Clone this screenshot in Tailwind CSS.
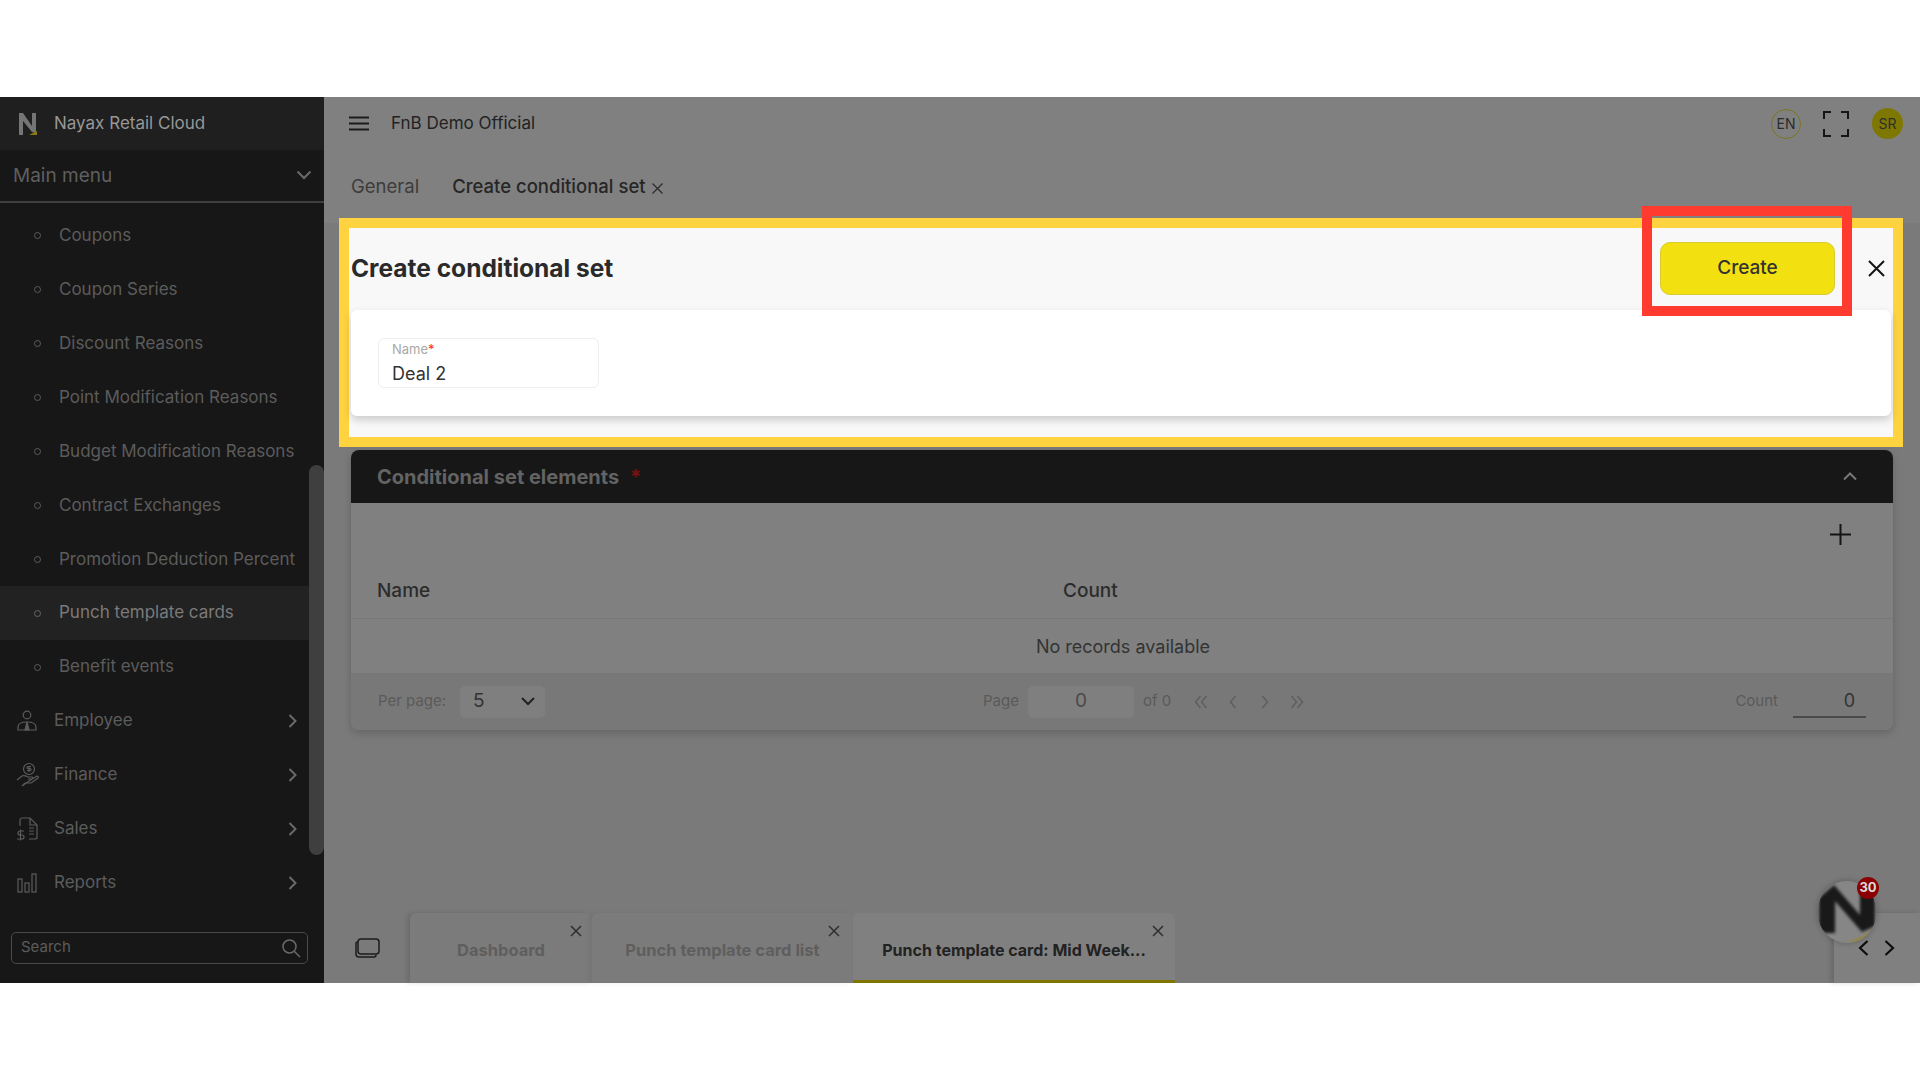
<!DOCTYPE html>
<html lang="en">
<head>
    <meta charset="UTF-8" />
    <title>Nayax Retail Cloud</title>
    <script src="https://cdn.jsdelivr.net/npm/@tailwindcss/browser@4"></script>
</head>
<body class="bg-white font-['Inter',sans-serif] h-[1080px] w-[1920px] overflow-hidden">
    <div class="h-[97px]"></div>

    <div class="h-[886px] flex bg-[#808080]">
        <!-- sidebar -->
        <aside class="relative w-[324px] shrink-0 flex flex-col bg-[#171717] text-[#5c5c5c]">
            <div class="h-[53px] flex items-center bg-[#1f1f1f] pl-[18px]">
                <svg class="w-[20px] h-[24px]" viewBox="0 0 20 24">
                    <path d="M1 23V1h4l9 13V1h4v20l-4-1L5 9v14z" fill="#757575"/>
                    <path d="M11 23l8-4v4z" fill="#8a7a10"/>
                </svg>
                <span class="ml-[16px] pt-[1px] text-[17px] text-[#979797]">Nayax Retail Cloud</span>
            </div>
            <div class="h-[53px] flex items-center justify-between pl-[13px] pr-[12px] border-b-2 border-[#3f3f3f]">
                <span class="pt-[2px] text-[19px] text-[#5f5f5f]">Main menu</span>
                <svg class="w-[16px] h-[10px] mb-[2px]" viewBox="0 0 16 10" fill="none" stroke="#6a6a6a" stroke-width="2"><path d="M1.500 1.500L8 8l6.500-6.500"/></svg>
            </div>
            <ul class="pt-[6px] pr-[15px] text-[17px]">
                <li class="h-[53.9px] flex items-center pl-[34px]"><span class="w-[7px] h-[7px] rounded-full border border-[#5c5c5c] mr-[18px]"></span>Coupons</li>
                <li class="h-[53.9px] flex items-center pl-[34px]"><span class="w-[7px] h-[7px] rounded-full border border-[#5c5c5c] mr-[18px]"></span>Coupon Series</li>
                <li class="h-[53.9px] flex items-center pl-[34px]"><span class="w-[7px] h-[7px] rounded-full border border-[#5c5c5c] mr-[18px]"></span>Discount Reasons</li>
                <li class="h-[53.9px] flex items-center pl-[34px]"><span class="w-[7px] h-[7px] rounded-full border border-[#5c5c5c] mr-[18px]"></span>Point Modification Reasons</li>
                <li class="h-[53.9px] flex items-center pl-[34px]"><span class="w-[7px] h-[7px] rounded-full border border-[#5c5c5c] mr-[18px]"></span>Budget Modification Reasons</li>
                <li class="h-[53.9px] flex items-center pl-[34px]"><span class="w-[7px] h-[7px] rounded-full border border-[#5c5c5c] mr-[18px]"></span>Contract Exchanges</li>
                <li class="h-[53.9px] flex items-center pl-[34px]"><span class="w-[7px] h-[7px] rounded-full border border-[#5c5c5c] mr-[18px]"></span>Promotion Deduction Percent</li>
                <li class="h-[53.9px] flex items-center pl-[34px] bg-[#222222] text-[#7a7a7a]"><span class="w-[7px] h-[7px] rounded-full border border-[#666666] mr-[18px]"></span>Punch template cards</li>
                <li class="h-[53.9px] flex items-center pl-[34px]"><span class="w-[7px] h-[7px] rounded-full border border-[#5c5c5c] mr-[18px]"></span>Benefit events</li>
                <li class="h-[53.9px] flex items-center pl-[17px] pr-[12px]">
                    <svg class="w-[20px] h-[22px] mr-[17px]" viewBox="0 0 20 22" fill="none" stroke="#5c5c5c" stroke-width="1.200"><circle cx="10" cy="5" r="3.800"/><path d="M1 20v-3c0-3 3-5 9-5s9 2 9 5v3z"/><path d="M10 12l-2 8h4z" fill="#5c5c5c"/></svg>
                    <span class="flex-1">Employee</span>
                    <svg class="w-[9px] h-[14px]" viewBox="0 0 9 14" fill="none" stroke="#6a6a6a" stroke-width="2"><path d="M1.500 1l6 6-6 6"/></svg>
                </li>
                <li class="h-[53.9px] flex items-center pl-[16px] pr-[12px]">
                    <svg class="w-[23px] h-[25px] mr-[15px]" viewBox="0 0 23 25" fill="none" stroke="#5c5c5c" stroke-width="1.200"><circle cx="13" cy="7" r="5.500"/><path d="M13 4v6M11 8.500h3a1 1 0 000-2h-2a1 1 0 010-2h3"/><path d="M1 18l5-4c2-1 4 0 6 1h4c1 0 1 2 0 2h-4m4 0l5-3c1 0 1.500 1 1 2l-7 5H9l-3 3z"/></svg>
                    <span class="flex-1">Finance</span>
                    <svg class="w-[9px] h-[14px]" viewBox="0 0 9 14" fill="none" stroke="#6a6a6a" stroke-width="2"><path d="M1.500 1l6 6-6 6"/></svg>
                </li>
                <li class="h-[53.9px] flex items-center pl-[16px] pr-[12px]">
                    <svg class="w-[22px] h-[25px] mr-[16px]" viewBox="0 0 22 25" fill="none" stroke="#5c5c5c" stroke-width="1.200"><path d="M4 10V4c0-1 1-2 2-2h8l7 7v12c0 1-1 2-2 2h-6"/><path d="M14 2v7h7M13 12h5M13 15h5M13 18h5"/><path d="M8 15H4a1.800 1.800 0 000 4h2a1.800 1.800 0 010 4H1M4.500 13.500v11"/></svg>
                    <span class="flex-1">Sales</span>
                    <svg class="w-[9px] h-[14px]" viewBox="0 0 9 14" fill="none" stroke="#6a6a6a" stroke-width="2"><path d="M1.500 1l6 6-6 6"/></svg>
                </li>
                <li class="h-[53.9px] flex items-center pl-[17px] pr-[12px]">
                    <svg class="w-[20px] h-[20px] mr-[17px]" viewBox="0 0 20 20" fill="none" stroke="#5c5c5c" stroke-width="1.200"><rect x="1" y="6" width="4" height="13"/><rect x="8" y="10" width="4" height="9"/><rect x="15" y="1" width="4" height="18"/></svg>
                    <span class="flex-1">Reports</span>
                    <svg class="w-[9px] h-[14px]" viewBox="0 0 9 14" fill="none" stroke="#6a6a6a" stroke-width="2"><path d="M1.500 1l6 6-6 6"/></svg>
                </li>
            </ul>
            <div class="mt-[22px] ml-[11px] w-[297px] h-[32px] flex items-center justify-between pl-[9px] pr-[6px] border border-[#4a4a4a] rounded-[5px] text-[15px]">
                <span>Search</span>
                <svg class="w-[20px] h-[20px]" viewBox="0 0 20 20" fill="none" stroke="#6a6a6a" stroke-width="1.500"><circle cx="8.500" cy="8.500" r="6.500"/><path d="M13.500 13.500L19 19"/></svg>
            </div>
            <!-- scrollbar floats over the list -->
            <div class="absolute right-0 top-[368px] w-[15px] h-[390px] rounded-[8px] bg-[#3f3f3f]"></div>
        </aside>

        <main class="flex-1 min-w-0 flex flex-col">
            <header class="h-[53px] shrink-0 flex items-center pl-[25px] pr-[17px]">
                <svg class="w-[20px] h-[15px]" viewBox="0 0 20 15" fill="none" stroke="#1c1c1c" stroke-width="2"><path d="M0 1.500h20M0 7.500h20M0 13.500h20"/></svg>
                <span class="ml-[22px] pt-[1px] text-[17px] text-[#222222] flex-1">FnB Demo Official</span>
                <span class="w-[30px] h-[30px] rounded-full border border-[#7c7420] flex items-center justify-center text-[14px] text-[#2b2b2b]">EN</span>
                <svg class="ml-[22px] w-[26px] h-[26px]" viewBox="0 0 26 26" fill="none" stroke="#151515" stroke-width="2"><path d="M1 8V1h7M18 1h7v7M25 18v7h-7M8 25H1v-7"/></svg>
                <span class="ml-[23px] w-[31px] h-[31px] rounded-full bg-[#7f7800] flex items-center justify-center text-[14px] text-[#2f2f2f]">SR</span>
            </header>
            <nav class="h-[73px] shrink-0 flex items-start pl-[27px] pt-[23px] text-[18.5px] bg-[#808080]">
                <span class="text-[#3c3c3c]">General</span>
                <span class="ml-[33px] text-[#262626] font-medium">Create conditional set</span>
                <svg class="ml-[6px] mt-[10px] w-[11px] h-[11px]" viewBox="0 0 11 11" fill="none" stroke="#2a2a2a" stroke-width="1.200"><path d="M.5.5l10 10M10.500.5l-10 10"/></svg>
            </nav>

            <div class="relative flex-1 min-h-0 flex flex-col bg-[#7a7a7a]">
                <!-- highlighted panel -->
                <section class="relative z-10 mt-[-5px] ml-[15px] mr-[17px] h-[229px] border-[10px] border-[#ffd23f] bg-[#f8f8f8] px-[2px]">
                    <div class="h-[82px] flex items-center justify-between pr-[6px] pb-[2px]">
                        <h1 class="text-[24.5px] font-bold text-[#2a2a2a]">Create conditional set</h1>
                        <div class="flex items-center">
                            <button class="w-[175px] h-[53px] rounded-[10px] bg-[#f2e011] border border-[#d8ca30] text-[19px] font-medium text-[#333333]">Create</button>
                            <svg class="ml-[33px] w-[17px] h-[17px]" viewBox="0 0 17 17" fill="none" stroke="#151515" stroke-width="2"><path d="M1 1l15 15M16 1L1 16"/></svg>
                        </div>
                    </div>
                    <div class="h-[106px] bg-white rounded-[6px] shadow-[0_4px_8px_rgba(0,0,0,0.18)] pl-[27px] pt-[28px]">
                        <div class="w-[221px] h-[50px] border border-[#eeeeee] rounded-[6px] pl-[13px] pt-[3px]">
                            <div class="text-[13px] leading-[15px] text-[#a8a8a8]">Name<span class="text-[#ff2a2a]">*</span></div>
                            <div class="text-[18px] leading-[24px] mt-[5px] text-[#333333]">Deal 2</div>
                        </div>
                    </div>
                    <!-- red annotation round the button -->
                    <div class="absolute right-[41px] top-[-22px] w-[210px] h-[110px] border-[10px] border-[#ff3b30]"></div>
                </section>

                <section class="mt-[3px] mx-[27px] h-[280px] shrink-0 flex flex-col rounded-[8px] bg-[#808080] shadow-[0_3px_8px_rgba(0,0,0,0.18)]">
                    <div class="h-[53px] shrink-0 flex items-center justify-between bg-[#171717] rounded-t-[8px] pl-[26px] pr-[36px]">
                        <span class="text-[20px] font-bold text-[#636363]">Conditional set elements <span class="ml-[6px] text-[#7a1010]">*</span></span>
                        <svg class="w-[14px] h-[9px]" viewBox="0 0 14 9" fill="none" stroke="#777777" stroke-width="2"><path d="M1 7.500l6-6 6 6"/></svg>
                    </div>
                    <div class="h-[62px] shrink-0 flex justify-end pt-[21px] pr-[42px]">
                        <svg class="w-[21px] h-[21px]" viewBox="0 0 21 21" fill="none" stroke="#151515" stroke-width="2"><path d="M10.500 0v21M0 10.500h21"/></svg>
                    </div>
                    <div class="h-[54px] shrink-0 flex items-center pl-[26px] border-b border-[#777777] text-[19px] font-medium text-[#2c2c2c]">
                        <span class="w-[686px]">Name</span>
                        <span>Count</span>
                    </div>
                    <div class="h-[54px] shrink-0 flex items-center justify-center pl-[2px] text-[18px] text-[#333333]">No records available</div>
                    <div class="flex-1 flex items-center bg-[#787878] rounded-b-[8px] pl-[27px] pr-[27px] text-[15px] text-[#5a5a5a]">
                        <span class="w-[82px]">Per page:</span>
                        <div class="w-[85px] h-[32px] flex items-center justify-between rounded-[5px] bg-[#7f7f7f] pl-[13px] pr-[10px] text-[19px] text-[#333333]">
                            5
                            <svg class="w-[14px] h-[9px]" viewBox="0 0 14 9" fill="none" stroke="#222222" stroke-width="2"><path d="M1 1l6 6 6-6"/></svg>
                        </div>
                        <span class="ml-[438px]">Page</span>
                        <div class="ml-[9px] w-[106px] h-[32px] flex items-center justify-center rounded-[5px] bg-[#7f7f7f] text-[19px] text-[#4a4a4a]">0</div>
                        <span class="ml-[9px]">of 0</span>
                        <div class="ml-[23px] flex items-center gap-[18px]">
                            <svg class="w-[14px] h-[14px]" viewBox="0 0 14 14" fill="none" stroke="#5f5f5f" stroke-width="1.500"><path d="M6.500 1l-5 6 5 6M12.500 1l-5 6 5 6"/></svg>
                            <svg class="w-[14px] h-[14px]" viewBox="0 0 14 14" fill="none" stroke="#5f5f5f" stroke-width="1.500"><path d="M9.500 1l-5 6 5 6"/></svg>
                            <svg class="w-[14px] h-[14px]" viewBox="0 0 14 14" fill="none" stroke="#5f5f5f" stroke-width="1.500"><path d="M4.500 1l5 6-5 6"/></svg>
                            <svg class="w-[14px] h-[14px]" viewBox="0 0 14 14" fill="none" stroke="#5f5f5f" stroke-width="1.500"><path d="M1.500 1l5 6-5 6M7.500 1l5 6-5 6"/></svg>
                        </div>
                        <span class="ml-auto">Count</span>
                        <div class="ml-[15px] w-[73px] h-[32px] flex items-center justify-end pr-[11px] border-b-2 border-[#4a4a4a] text-[18px] text-[#333333]">0</div>
                    </div>
                </section>

                <div class="flex-1"></div>

                <!-- open pages strip -->
                <footer class="h-[70px] shrink-0 flex items-stretch bg-[#7a7a7a] text-[16px] font-bold text-[#5e5e5e]">
                    <div class="w-[86px] flex items-center justify-center">
                        <svg class="w-[25px] h-[20px]" viewBox="0 0 25 20" fill="none" stroke="#1c1c1c" stroke-width="1.500"><rect x="3" y="1" width="21" height="15" rx="3"/><path d="M3 4H2.500A1.500 1.500 0 001 5.500V16c0 1.500 1 3 3 3h15c1 0 2-.5 2-2"/></svg>
                    </div>
                    <div class="relative w-[182px] flex items-center justify-center pt-[4px] text-[16.5px] bg-[#7b7b7b] shadow-[-3px_0_5px_rgba(0,0,0,0.12)] rounded-t-[6px]">
                        Dashboard
                        <svg class="absolute right-[10px] top-[12px] w-[12px] h-[12px]" viewBox="0 0 12 12" fill="none" stroke="#2e2e2e" stroke-width="1.500"><path d="M1 1l10 10M11 1L1 11"/></svg>
                    </div>
                    <div class="relative w-[261px] flex items-center justify-center pt-[4px] text-[16.5px] bg-[#7b7b7b] shadow-[-3px_0_5px_rgba(0,0,0,0.06)] rounded-t-[6px]">
                        Punch template card list
                        <svg class="absolute right-[13px] top-[12px] w-[12px] h-[12px]" viewBox="0 0 12 12" fill="none" stroke="#2e2e2e" stroke-width="1.500"><path d="M1 1l10 10M11 1L1 11"/></svg>
                    </div>
                    <div class="relative w-[322px] flex items-center justify-center pt-[6px] bg-[#808080] rounded-t-[6px] border-b-[3px] border-[#7f7600] text-[#222222]">
                        Punch template card: Mid Week...
                        <svg class="absolute right-[11px] top-[12px] w-[12px] h-[12px]" viewBox="0 0 12 12" fill="none" stroke="#2e2e2e" stroke-width="1.500"><path d="M1 1l10 10M11 1L1 11"/></svg>
                    </div>
                    <div class="flex-1"></div>
                    <div class="w-[86px] flex items-center justify-center gap-[15px] bg-[#808080] shadow-[-3px_0_5px_rgba(0,0,0,0.15)] pr-[1px]">
                        <svg class="w-[11px] h-[16px]" viewBox="0 0 11 16" fill="none" stroke="#0d0d0d" stroke-width="2.200"><path d="M9.500 1l-7.500 7 7.500 7"/></svg>
                        <svg class="w-[11px] h-[16px]" viewBox="0 0 11 16" fill="none" stroke="#0d0d0d" stroke-width="2.200"><path d="M1.500 1l7.500 7-7.500 7"/></svg>
                    </div>
                </footer>

                <!-- floating assistant button -->
                <div class="absolute left-[1494px] top-[658px] w-[58px] h-[62px] rounded-full bg-[#868686] shadow-[0_0_6px_rgba(0,0,0,0.25)] overflow-hidden">
                    <svg class="w-full h-full blur-[1.5px]" viewBox="0 0 58 62">
                        <path d="M1 50V17L16 4l26 30V5h15v40l-13 6-27-31v32H8z" fill="#191919"/>
                        <path d="M26 61c11-1 22-5 31-14l-4 14z" fill="#9a8520"/>
                    </svg>
                </div>
                <span class="absolute left-[1533px] top-[654px] w-[22px] h-[22px] rounded-full bg-[#8b0000] flex items-center justify-center text-[13px] font-bold text-[#dddddd]">30</span>
            </div>
        </main>
    </div>

    <div class="h-[97px]"></div>
</body>
</html>
